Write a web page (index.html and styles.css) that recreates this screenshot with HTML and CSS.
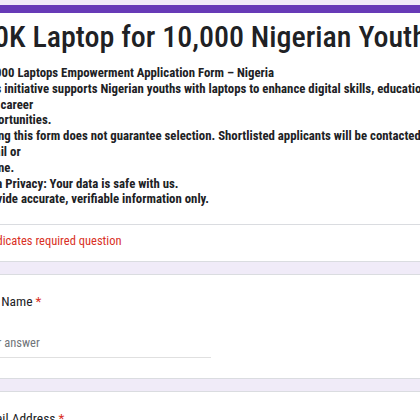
FILE: index.html
```html
<!DOCTYPE html>
<html lang="en">
<head>
<meta charset="utf-8">
<title>10K Laptop for 10,000 Nigerian Youths</title>
<link rel="stylesheet" href="styles.css">
</head>
<body>
<main class="form">
  <section class="card header-card">
    <div class="accent"></div>
    <div class="header-body">
      <h1 class="title">10K Laptop for 10,000 Nigerian Youths</h1>
      <div class="desc">
        <p>10,000 Laptops Empowerment Application Form – Nigeria</p>
        <p>This initiative supports Nigerian youths with laptops to enhance digital skills, education,</p>
        <p>and career</p>
        <p>opportunities.</p>
        <p>Filling this form does not guarantee selection. Shortlisted applicants will be contacted via</p>
        <p>email or</p>
        <p>phone.</p>
        <p>Data Privacy: Your data is safe with us.</p>
        <p>Provide accurate, verifiable information only.</p>
      </div>
    </div>
    <div class="divider"></div>
    <div class="required">* Indicates required question</div>
  </section>

  <section class="card question">
    <div class="q-title">Full Name <span class="star">*</span></div>
    <div class="answer">Your answer</div>
  </section>

  <section class="card question">
    <div class="q-title">Email Address <span class="star">*</span></div>
    <div class="answer">Your answer</div>
  </section>
</main>
</body>
</html>
```

FILE: styles.css
```css
html, body {
  margin: 0;
  padding: 0;
  background: #f0ebf8;
  overflow: hidden;
  height: 420px;
}

.form {
  margin: 5px 0 0 -46px;
  width: 580px;
  display: flex;
  flex-direction: column;
  gap: 12px;
  font-family: "Roboto Condensed", Roboto, "Liberation Sans", sans-serif;
  color: #202124;
}

.card {
  background: #fff;
  border: 1px solid #dadce0;
  border-radius: 8px;
}

.header-card {
  border-top: none;
  overflow: hidden;
}

.accent {
  height: 8px;
  background: #673ab7;
}

.header-body {
  padding: 3px 24px 0;
}

.title {
  margin: 0;
  font-size: 30px;
  font-weight: 500;
  line-height: 41px;
  white-space: nowrap;
}

.desc {
  margin-top: 8px;
  font-size: 12.8px;
  font-weight: 700;
  line-height: 15.8px;
  white-space: nowrap;
}

.desc p {
  margin: 0;
}

.divider {
  margin-top: 17px;
  height: 1px;
  background: #dadce0;
}

.required {
  padding: 8px 24px 12px;
  font-size: 12.5px;
  line-height: 16px;
  color: #d93025;
}

.question {
  padding: 18px 24px 20px;
}

.q-title {
  font-size: 13.5px;
  line-height: 16px;
}

.star {
  color: #d93025;
}

.answer {
  margin-top: 26px;
  width: 232px;
  font-size: 12.5px;
  line-height: 16px;
  color: #70757a;
  padding-bottom: 6px;
  border-bottom: 1px solid #e0e0e0;
}
```
